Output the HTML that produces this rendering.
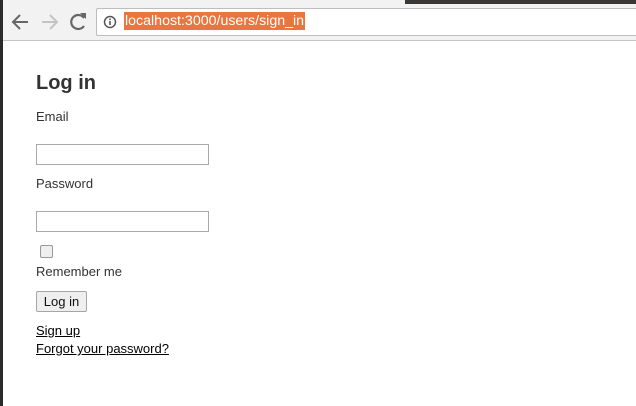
<!DOCTYPE html>
<html><head><style>
body{margin:0;width:636px;height:406px;overflow:hidden;background:#fff;font-family:"Liberation Sans",sans-serif;position:relative}
.ls{position:absolute;left:0;top:0;width:3px;height:406px;background:#2b2b2b}
.tb{position:absolute;left:0;top:0;width:636px;height:40px;background:#f2f2f2;border-bottom:1px solid #c4c4c4}
.topdark{position:absolute;left:405px;top:0;width:231px;height:4px;background:#3a3835}
.url{position:absolute;left:96px;top:8px;width:545px;height:26px;background:#fff;border:1px solid #bdbdbd;border-radius:2px}
.hl{position:absolute;left:124px;top:12px;height:18px;background:#e9753f;color:#fff;font-size:14.2px;line-height:18px;padding:0 1px}
.c{position:absolute;left:36px;color:#333;font-size:13px}
h1{position:absolute;left:36px;top:72px;margin:0;font-size:20px;color:#333}
input[type=text]{position:absolute;left:36px;width:169px;height:17px;border:1px solid #a9a9a9;margin:0;padding:1px}
a{color:#000;font-size:13px;position:absolute;left:36px}
</style></head><body>
<div class="tb"></div><div class="topdark"></div><div class="ls"></div>
<svg style="position:absolute;left:10px;top:11px" width="80" height="22">
<path d="M18 11H4M10 4L3 11L10 18" stroke="#666" stroke-width="2" fill="none"/>
<path d="M32 11H46M40 4L47 11L40 18" stroke="#c4c4c4" stroke-width="2" fill="none"/>
<path d="M74 7A7 7 0 1 0 74 15" stroke="#666" stroke-width="2.2" fill="none"/><path d="M70 2h6v6z" fill="#666"/>
</svg>
<div class="url"></div>
<svg style="position:absolute;left:103px;top:15px" width="14" height="14"><circle cx="7" cy="7" r="5.5" stroke="#555" stroke-width="1.5" fill="none"/><rect x="6.2" y="6" width="1.6" height="4" fill="#555"/><rect x="6.2" y="3.5" width="1.6" height="1.6" fill="#555"/></svg>
<div class="hl">localhost:3000/users/sign_in</div>
<h1>Log in</h1>
<div class="c" style="top:109px">Email</div>
<input type="text" style="top:144px">
<div class="c" style="top:176px">Password</div>
<input type="text" style="top:211px">
<div style="position:absolute;left:40px;top:245px;width:11px;height:11px;border:1px solid #999;border-radius:2px;background:#eee"></div>
<div class="c" style="top:264px">Remember me</div>
<div style="position:absolute;left:36px;top:291px;width:49px;height:19px;border:1px solid #a6a6a6;border-radius:2px;background:#efefef;font-size:13px;line-height:19px;text-align:center;color:#111">Log in</div>
<a style="top:323px" href="#">Sign up</a>
<a style="top:341px" href="#">Forgot your password?</a>
</body></html>
